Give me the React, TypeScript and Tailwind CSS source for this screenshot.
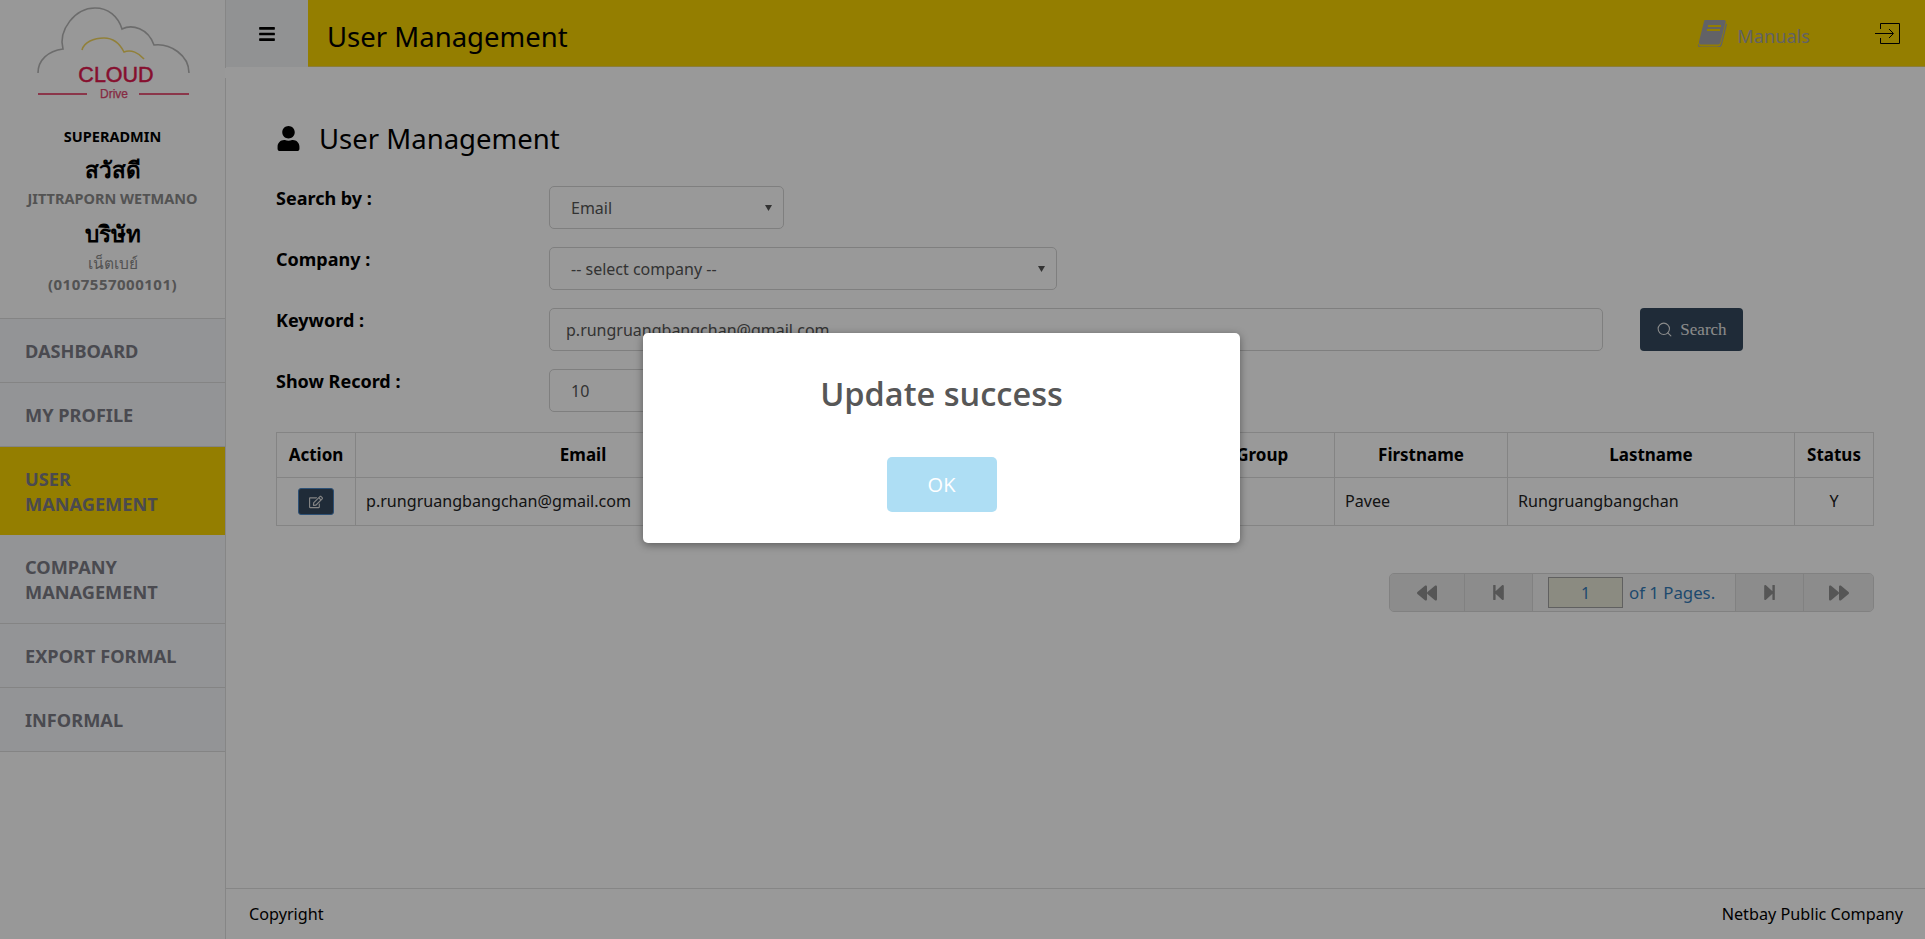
import { FaBars, FaBackward, FaForward, FaRegEdit, FaStepBackward, FaStepForward, FaUser } from "react-icons/fa"
import { Search } from "lucide-react"

const menu = [
	{ label: "DASHBOARD" },
	{ label: "MY PROFILE" },
	{ label: "USER MANAGEMENT", active: true },
	{ label: "COMPANY MANAGEMENT" },
	{ label: "EXPORT FORMAL" },
	{ label: "INFORMAL" },
]

function Logo() {
	return (
		<svg width="226" height="100" viewBox="0 0 226 100" className="block">
			<path
				d="M38 73C38 60 48 51 63 49C58 30 75 8 95 8C108 8 118 16 122 29C132 24 148 28 154 45C170 43 189 55 189 73"
				fill="none"
				stroke="#b4b4b4"
				strokeWidth="1.6"
			/>
			<path
				d="M82 50C84 42 94 38 104 38C113 38 120 44 124 52C131 49 139 53 144 59"
				fill="none"
				stroke="#f2d660"
				strokeWidth="1.6"
			/>
			<text
				x="116"
				y="82"
				textAnchor="middle"
				fontSize="21.5"
				fill="#e01a4f"
				stroke="#e01a4f"
				strokeWidth="0.5"
				fontFamily="Liberation Sans, sans-serif"
			>
				CLOUD
			</text>
			<text
				x="114"
				y="98"
				textAnchor="middle"
				fontSize="12"
				fill="#e0476f"
				stroke="#e0476f"
				strokeWidth="0.25"
				fontFamily="Liberation Sans, sans-serif"
			>
				Drive
			</text>
			<path d="M38 94H87M139 94H189" stroke="#e85a7c" strokeWidth="2" />
		</svg>
	)
}

function Sidebar() {
	return (
		<aside className="flex w-[226px] shrink-0 flex-col border-r border-[#e0e0e0] bg-[#fdfdfd]">
			<div className="h-[318px] text-center">
				<Logo />
				<div className="mt-[27px] text-[14.5px] leading-[18px] font-bold text-black">SUPERADMIN</div>
				<div className="mt-[11px] text-[22.5px] leading-[28px] font-bold text-black">สวัสดี</div>
				<div className="mt-[5px] text-[14.5px] leading-[18px] font-bold text-[#8a8a8a]">JITTRAPORN WETMANO</div>
				<div className="mt-[13px] text-[22.5px] leading-[28px] font-bold text-black">บริษัท</div>
				<div className="mt-[6px] text-[15.5px] leading-[18px] text-[#8a8a8a]">เน็ตเบย์</div>
				<div className="mt-[3px] text-[15px] leading-[18px] font-bold tracking-[0.5px] text-[#8a8a8a]">
					(0107557000101)
				</div>
			</div>
			<nav className="border-t border-[#dcdcdc]">
				{menu.map((m) => (
					<div
						key={m.label}
						className={
							m.active
								? "flex h-[88px] items-center bg-[#f7d200] pt-[2px] pr-[40px] pl-[25px] text-[18.2px] leading-[25px] font-bold text-[#7c7c85]"
								: "flex items-center border-b border-[#dcdcdc] bg-[#f5f7fa] pt-[20px] pr-[40px] pb-[18px] pl-[25px] text-[18.2px] leading-[25px] font-bold text-[#7c7c85]"
						}
					>
						<span>{m.label}</span>
					</div>
				))}
			</nav>
		</aside>
	)
}

function Header() {
	return (
		<header className="flex h-[67px] shrink-0">
			<div className="flex w-[82px] items-center justify-center bg-[#f2f3f5] text-black">
				<FaBars className="size-[18px]" />
			</div>
			<div className="flex flex-1 items-center border-b border-[#e8d060] bg-[#f7d200] pr-[25px] pl-[19px]">
				<div className="flex-1 pt-[7px] text-[27.5px] text-black">User Management</div>
				{/* slanted book */}
				<svg width="29" height="27" viewBox="0 0 29 27" className="mr-[10px] text-[#a4a4aa]">
					<path
						d="M7 0H26C27.5 0 28 1 27.6 2.5L22.5 22C22 24 21 24.5 19.5 24.5H3C1.5 24.5 0.5 23.5 1 21.5L6 1.5C6.2 0.5 6.5 0 7 0Z"
						fill="currentColor"
					/>
					<path d="M28.5 4L23.5 24C23 26 21.5 27 19.5 27H3C1 27 0 25.5 0 24" fill="none" stroke="currentColor" strokeWidth="1.2" />
					<path d="M10 6H23M9 10H22" stroke="#f7d200" strokeWidth="1.8" />
				</svg>
				<span className="mr-[65px] pt-[8px] text-[18.2px] text-[#a4a4aa]">Manuals</span>
				<svg width="25" height="21" viewBox="0 0 25 21" fill="none" stroke="black" strokeWidth="1">
					<path d="M5.5 6V0.5H24.5V20.5H5.5V15" />
					<path d="M0 10.5H18M14 6L18.5 10.5L14 15" />
				</svg>
			</div>
		</header>
	)
}

function SelectBox({ value, width }: { value: string; width: string }) {
	return (
		<div className={`relative h-[43px] ${width}`}>
			<select
				value={value}
				onChange={() => {}}
				className="h-full w-full appearance-none rounded-[5px] border border-[#d4d4d4] bg-white px-[21px] text-[16px] text-[#555]"
			>
				<option>{value}</option>
			</select>
			<svg width="8" height="8" viewBox="0 0 8 8" className="absolute top-[18px] right-[11px]">
				<path d="M0 1H7L3.5 7Z" fill="#555" />
			</svg>
		</div>
	)
}

function FormRow({ label, children }: { label: string; children: React.ReactNode }) {
	return (
		<div className="mb-[18px] flex">
			<label className="w-[273px] shrink-0 text-[18px] leading-[24px] font-bold text-black">{label}</label>
			{children}
		</div>
	)
}

function Pager() {
	const btn = "flex h-full items-center justify-center border-[#d8d8d8] bg-[#e9e9e9] text-[#8f8f8f]"
	return (
		<div className="mt-[47px] ml-auto flex h-[39px] w-[485px] overflow-hidden rounded-[5px] border border-[#d8d8d8] bg-[#f4f4f4]">
			<div className={`${btn} w-[75px] border-r`}>
				<FaBackward className="size-[20px]" />
			</div>
			<div className={`${btn} w-[68px] border-r`}>
				<FaStepBackward className="size-[17px]" />
			</div>
			<div className="flex flex-1 items-center pl-[15px] text-[16.8px] text-[#337ab7]">
				<input
					value="1"
					readOnly
					className="mr-[6px] h-[31px] w-[75px] border border-[#a0a0a0] bg-[#e8e8d8] text-center text-[16px] text-[#337ab7]"
				/>
				of 1 Pages.
			</div>
			<div className={`${btn} w-[68px] border-l`}>
				<FaStepForward className="size-[17px]" />
			</div>
			<div className={`${btn} w-[70px] border-l`}>
				<FaForward className="size-[20px]" />
			</div>
		</div>
	)
}

function UserTable() {
	const th = "border border-[#dcdcdc] font-bold text-black text-center text-[17px]"
	const td = "border border-[#dcdcdc] px-[10px] text-[16.1px] text-[#222]"
	return (
		<table className="w-full table-fixed border-collapse">
			<thead>
				<tr className="h-[45px]">
					<th className={`${th} w-[79px]`}>Action</th>
					<th className={`${th} w-[455px]`}>Email</th>
					<th className={`${th} w-[336px]`}>Company</th>
					<th className={`${th} w-[188px]`}>User Group</th>
					<th className={`${th} w-[173px]`}>Firstname</th>
					<th className={`${th} w-[287px]`}>Lastname</th>
					<th className={th}>Status</th>
				</tr>
			</thead>
			<tbody>
				<tr className="h-[48px]">
					<td className={`${td} text-center`}>
						<button className="inline-flex h-[27px] w-[36px] items-center justify-center rounded-[3px] border border-[#4a86c4] bg-[#34495e] align-middle text-[#ddd]">
							<FaRegEdit className="size-[14px]" />
						</button>
					</td>
					<td className={td}>p.rungruangbangchan@gmail.com</td>
					<td className={td}></td>
					<td className={td}></td>
					<td className={td}>Pavee</td>
					<td className={td}>Rungruangbangchan</td>
					<td className={`${td} text-center`}>Y</td>
				</tr>
			</tbody>
		</table>
	)
}

export default function App() {
	return (
		<div className="relative flex h-[939px] w-[1925px] overflow-hidden bg-white font-['Noto_Sans',sans-serif]">
			<Sidebar />
			<main className="flex min-w-0 flex-1 flex-col">
				<Header />
				<div className="flex-1 pt-[52px] pr-[51px] pl-[50px]">
					<div className="mb-[28px] flex h-[39px] items-center">
						<FaUser className="mr-[18px] size-[25px] text-black" />
						<h1 className="text-[27.5px] text-black">User Management</h1>
					</div>
					<FormRow label="Search by :">
						<SelectBox value="Email" width="w-[235px]" />
					</FormRow>
					<FormRow label="Company :">
						<SelectBox value="-- select company --" width="w-[508px]" />
					</FormRow>
					<FormRow label="Keyword :">
						<input
							value="p.rungruangbangchan@gmail.com"
							readOnly
							className="h-[43px] w-[1054px] rounded-[5px] border border-[#d4d4d4] bg-white px-[16px] text-[16px] text-[#555]"
						/>
						<button className="ml-[37px] flex h-[43px] w-[103px] items-center justify-center gap-[7px] rounded-[4px] bg-[#34495e] font-['Liberation_Serif',serif] text-[17px] text-[#e8e8e8]">
							<Search className="size-[17px]" strokeWidth={1.5} />
							Search
						</button>
					</FormRow>
					<FormRow label="Show Record :">
						<SelectBox value="10" width="w-[235px]" />
					</FormRow>
					<div className="mt-[20px]">
						<UserTable />
					</div>
					<Pager />
				</div>
				<footer className="flex h-[51px] shrink-0 items-center justify-between border-t border-[#e0e0e0] pr-[22px] pl-[23px] text-[16.2px] text-black">
					<span>Copyright</span>
					<span>Netbay Public Company</span>
				</footer>
			</main>

			{/* break in the sidebar line under the toggle */}
			<div className="absolute top-[68px] left-[225px] h-[10px] w-[1px] bg-white" />

			{/* sweetalert style dialog */}
			<div className="absolute inset-0 bg-black/40">
				<div className="absolute top-[333px] left-[643px] flex h-[210px] w-[597px] flex-col items-center rounded-[5px] bg-white font-['Open_Sans',sans-serif] shadow-[0_2px_8px_rgba(0,0,0,0.4)]">
					<h2 className="mt-[38px] text-[32.5px] leading-[45px] font-semibold text-[#575757]">Update success</h2>
					<button className="mt-[41px] h-[55px] w-[110px] rounded-[5px] bg-[#aedef4] text-[20px] text-white">OK</button>
				</div>
			</div>
		</div>
	)
}
